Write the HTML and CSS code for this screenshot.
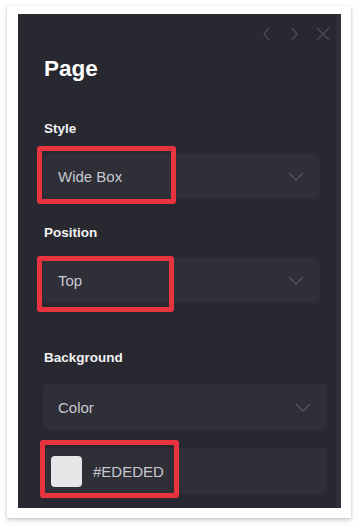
FILE: index.html
```html
<!DOCTYPE html>
<html>
<head>
<meta charset="utf-8">
<link rel="stylesheet" href="styles.css">
</head>
<body>
<div class="card">
  <div class="panel">
    <div class="topbar">
      <svg class="ticon" width="10" height="14" viewBox="0 0 10 14"><path d="M7 1 L2 7 L7 13" /></svg>
      <svg class="ticon" width="10" height="14" viewBox="0 0 10 14"><path d="M3 1 L8 7 L3 13" /></svg>
      <svg class="ticon" width="14" height="14" viewBox="0 0 14 14"><path d="M1 1 L13 13 M13 1 L1 13" /></svg>
    </div>
    <h1 class="title">Page</h1>

    <div class="label first">Style</div>
    <div class="select narrow">
      <span class="value">Wide Box</span>
      <svg class="chev" width="16" height="9" viewBox="0 0 16 9"><path d="M1 1 L8 8 L15 1" /></svg>
      <div class="mark mark-style"></div>
    </div>

    <div class="label">Position</div>
    <div class="select narrow">
      <span class="value">Top</span>
      <svg class="chev" width="16" height="9" viewBox="0 0 16 9"><path d="M1 1 L8 8 L15 1" /></svg>
      <div class="mark mark-pos"></div>
    </div>

    <div class="label bg">Background</div>
    <div class="select wide">
      <span class="value">Color</span>
      <svg class="chev" width="16" height="9" viewBox="0 0 16 9"><path d="M1 1 L8 8 L15 1" /></svg>
    </div>
    <div class="colorrow wide">
      <span class="swatch"></span>
      <span class="hex">#EDEDED</span>
      <div class="mark mark-color"></div>
    </div>
  </div>
</div>
</body>
</html>
```

FILE: styles.css
```css
* { box-sizing: border-box; }
html, body { margin: 0; }
body {
  background: #ffffff;
  padding: 6px 9px 10px 7px;
  font-family: "Liberation Sans", Arial, sans-serif;
}
.card {
  width: 344px;
  height: 512px;
  background: #ffffff;
  padding: 8px 10px 10px 11px;
  box-shadow: 0 1px 3px rgba(0,0,0,0.18), 0 3px 6px rgba(0,0,0,0.10);
}
.panel {
  width: 323px;
  height: 494px;
  background: #282830;
  box-shadow: inset -5px 0 0 #30303a;
  padding: 14px 0 0 25px;
  overflow: hidden;
}
.topbar {
  display: flex;
  justify-content: flex-end;
  align-items: center;
  gap: 17px;
  height: 12px;
  padding-right: 11px;
}
.ticon path {
  fill: none;
  stroke: #4a4a55;
  stroke-width: 1.4;
}
.title {
  margin: 16px 0 0 1px;
  font-size: 22.5px;
  line-height: 26px;
  font-weight: 700;
  color: #ffffff;
}
.label {
  margin: 26px 0 0 1px;
  font-size: 13.5px;
  line-height: 16px;
  font-weight: 700;
  color: #f2f2f4;
}
.label.first { margin-top: 39px; }
.label.bg { margin-top: 47px; }
.select, .colorrow {
  position: relative;
  height: 45px;
  background: #2f2f38;
  border-radius: 5px;
  display: flex;
  align-items: center;
  margin-top: 17px;
}
.select { padding: 0 16px 0 15px; justify-content: space-between; }
.narrow { width: 277px; }
.wide { width: 284px; }
.select.wide { height: 46px; margin-top: 18px; }
.colorrow { margin-top: 18px; height: 46px; padding-left: 8px; gap: 11px; }
.value, .hex {
  font-size: 15px;
  color: #c8c8d0;
}
.chev path {
  fill: none;
  stroke: #55555f;
  stroke-width: 1.3;
}
.swatch {
  width: 31px;
  height: 31px;
  border-radius: 4px;
  background: #e6e6e8;
}
.mark {
  position: absolute;
  border: 5px solid #e8343f;
  border-radius: 3px;
}
.mark-style { left: -6px; top: -8px; width: 139px; height: 58px; }
.mark-pos { left: -6px; top: -2px; width: 137px; height: 56px; }
.mark-color { left: -3px; top: -8px; width: 139px; height: 58px; }
```
